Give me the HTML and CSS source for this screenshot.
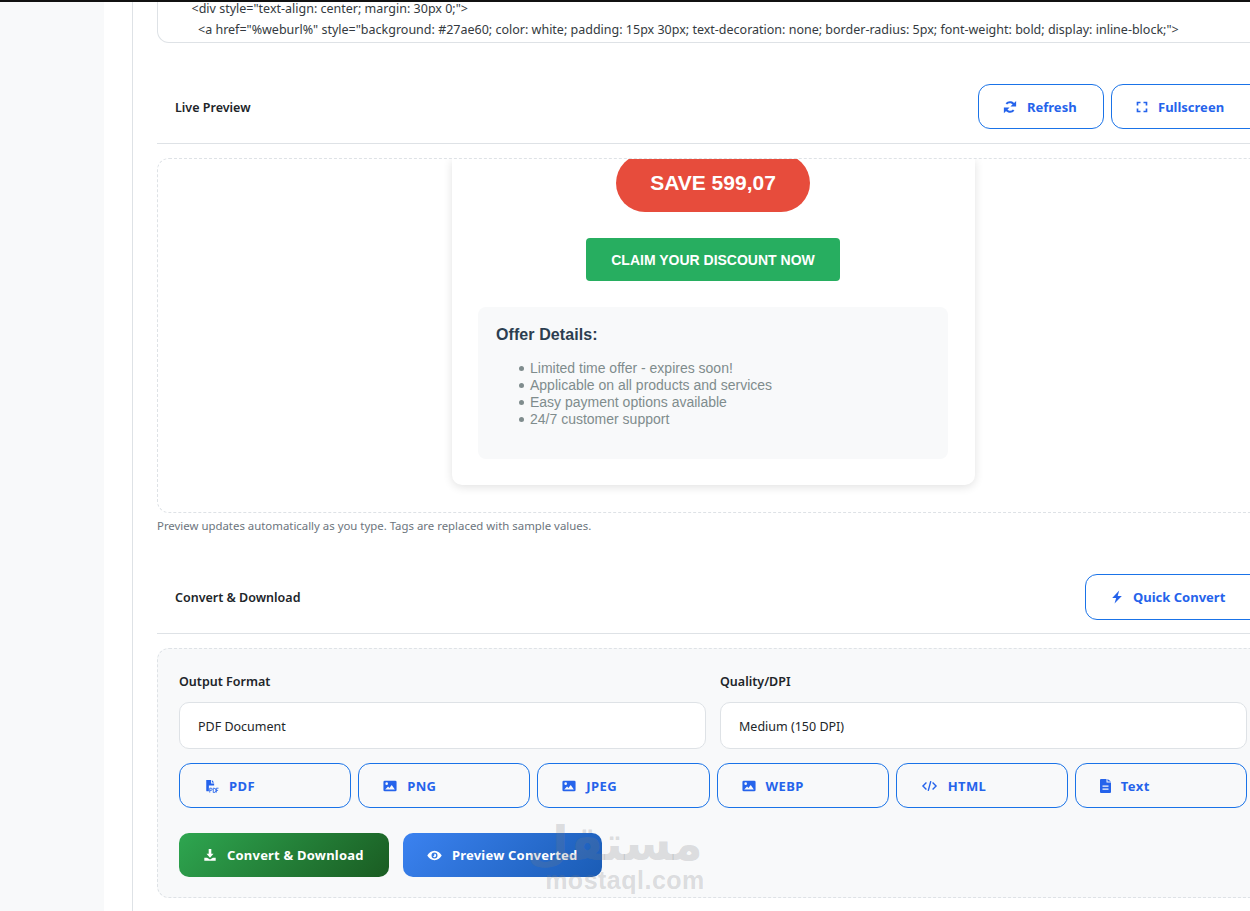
FILE: index.html
```html
<!DOCTYPE html>
<html lang="en">
<head>
<meta charset="utf-8">
<title>Convert &amp; Download</title>
<link rel="stylesheet" href="styles.css">
</head>
<body>
<svg class="defs" width="0" height="0" aria-hidden="true">
  <symbol id="i-image" viewBox="0 0 16 16"><path fill="currentColor" fill-rule="evenodd" d="M2 2h12a1.500 1.500 0 0 1 1.500 1.500v9A1.500 1.500 0 0 1 14 14H2a1.500 1.500 0 0 1-1.500-1.500v-9A1.500 1.500 0 0 1 2 2zm2.200 1.800a1.500 1.500 0 1 0 0 3 1.500 1.500 0 0 0 0-3zM2.500 12h11L10 6.800 7.300 10.300 5.800 8.700z"/></symbol>
</svg>
<div class="topbar"></div>
<div class="shell">
  <aside class="side"></aside>
  <main class="main">
    <div class="code"><span class="code-line">      &lt;div style="text-align: center; margin: 30px 0;"&gt;</span><span class="code-line">        &lt;a href="%weburl%" style="background: #27ae60; color: white; padding: 15px 30px; text-decoration: none; border-radius: 5px; font-weight: bold; display: inline-block;"&gt;</span></div>

    <header class="head head-preview">
      <h2 class="head-title">Live Preview</h2>
      <div class="head-actions">
        <button class="btn btn-refresh"><svg class="ico" viewBox="0 0 16 16"><path fill="none" stroke="currentColor" stroke-width="2.200" d="M13 6.500A5.300 5.300 0 0 0 3.800 4.400M3 9.500a5.300 5.300 0 0 0 9.200 2.100"/><path fill="currentColor" d="M15 1v6.500H8.500zM1 15V8.500h6.500z"/></svg>Refresh</button>
        <button class="btn btn-full"><svg class="ico ico-full" viewBox="0 0 16 16"><path fill="none" stroke="currentColor" stroke-width="2.200" d="M2 6V2h4M10 2h4v4M14 10v4h-4M6 14H2v-4"/></svg>Fullscreen</button>
      </div>
    </header>

    <section class="frame">
      <div class="mail">
        <div class="save">SAVE 599,07</div>
        <a class="claim">CLAIM YOUR DISCOUNT NOW</a>
        <div class="offer">
          <h3 class="offer-title">Offer Details:</h3>
          <ul class="offer-list">
            <li>Limited time offer - expires soon!</li>
            <li>Applicable on all products and services</li>
            <li>Easy payment options available</li>
            <li>24/7 customer support</li>
          </ul>
        </div>
      </div>
    </section>
    <p class="note">Preview updates automatically as you type. Tags are replaced with sample values.</p>

    <header class="head head-convert">
      <h2 class="head-title">Convert &amp; Download</h2>
      <div class="head-actions">
        <button class="btn btn-quick"><svg class="ico" viewBox="0 0 16 16"><path fill="currentColor" d="M10.500 .5 2.500 9.200h4.500L5.200 15.500 13.500 6.800H8.800z"/></svg>Quick Convert</button>
      </div>
    </header>

    <section class="panel">
      <div class="fields">
        <div class="field">
          <label class="label">Output Format</label>
          <div class="select">PDF Document</div>
        </div>
        <div class="field">
          <label class="label">Quality/DPI</label>
          <div class="select">Medium (150 DPI)</div>
        </div>
      </div>
      <div class="formats">
        <button class="fmt"><svg class="ico ico-pdf" viewBox="0 0 16 16"><path fill="currentColor" d="M2 1h5.500v4H11v2.500H5V14H3a1 1 0 0 1-1-1zM8.500 1 11 4H8.500z"/><path fill="none" stroke="currentColor" stroke-width="1" d="M6 15.500v-5h1.500a1 1 0 0 1 0 2.500H6M10 10.500v5h.7a2 2 0 0 0 0-5zM13.500 15.500v-5h2.500M13.500 13h2"/></svg>PDF</button>
        <button class="fmt"><svg class="ico"><use href="#i-image"/></svg>PNG</button>
        <button class="fmt"><svg class="ico"><use href="#i-image"/></svg>JPEG</button>
        <button class="fmt"><svg class="ico"><use href="#i-image"/></svg>WEBP</button>
        <button class="fmt"><svg class="ico ico-code" viewBox="0 0 17 16"><path fill="none" stroke="currentColor" stroke-width="1.600" d="M5 4 1 8l4 4M12 4l4 4-4 4M10 2.500l-3 11"/></svg>HTML</button>
        <button class="fmt"><svg class="ico ico-file" viewBox="0 0 11 14"><path fill="currentColor" fill-rule="evenodd" d="M1 0h5.500v3.500H11V13a1 1 0 0 1-1 1H1a1 1 0 0 1-1-1V1a1 1 0 0 1 1-1zM7.500 0 11 2.500H7.500zM2.500 6.500v1.300h6V6.500zM2.500 9.500v1.300h6V9.500z"/></svg>Text</button>
      </div>
      <div class="actions">
        <button class="cta cta-green"><svg class="ico" viewBox="0 0 16 16"><path fill="currentColor" d="M6.500 1h3v5.500H12L8 11 4 6.500h2.500zM1.500 11h3.200L8 13l3.300-2h3.200v3.500h-13z"/></svg>Convert &amp; Download</button>
        <button class="cta cta-blue"><svg class="ico ico-eye" viewBox="0 0 16 16"><path fill="currentColor" fill-rule="evenodd" d="M8 3c3.500 0 6.200 2.300 7.700 5-1.500 2.700-4.200 5-7.700 5S1.800 10.700.3 8C1.800 5.300 4.500 3 8 3zm0 1.800a3.200 3.200 0 1 0 0 6.400 3.200 3.200 0 0 0 0-6.400zm0 1.400a1.800 1.800 0 1 1-1.700 2.400c.9.300 1.800-.6 1.400-1.500z"/></svg>Preview Converted</button>
      </div>
    </section>
  </main>
</div>
<div class="watermark" aria-hidden="true">
  <span class="wm-ar" lang="ar" dir="rtl">مستقل</span>
  <span class="wm-en">mostaql.com</span>
</div>
</body>
</html>
```
FILE: styles.css
```css
* { box-sizing: border-box; }
html, body { margin: 0; height: 911px; overflow: hidden; }
body {
  background: #fff;
  font-family: "Noto Sans", "Open Sans", sans-serif;
  font-size: 13px;
  color: #212529;
  position: relative;
}
.defs { position: absolute; }
.topbar { height: 2px; background: #111; }
.shell { display: flex; width: 1300px; }
.side { width: 104px; flex: none; height: 909px; background: #f8f9fa; }
.main {
  margin-left: 28px;
  width: 1138px;
  height: 909px;
  padding-left: 24px;
  border-left: 1px solid #dee2e6;
  flex: none;
}
.code {
  height: 41px;
  border: 1px solid #dee2e6;
  border-top: 0;
  border-radius: 0 0 12px 12px;
  padding-left: 14px;
  white-space: pre;
  font-size: 12.500px;
  color: #343a40;
}
.code-line { display: block; line-height: 21px; }
.code-line:first-child { line-height: 13px; margin-bottom: 4px; }
.head {
  display: flex;
  align-items: center;
  justify-content: space-between;
  border-bottom: 1px solid #dee2e6;
  padding-left: 18px;
}
.head-preview { margin-top: 41px; height: 60px; padding-bottom: 14px; }
.head-convert { margin-top: 39px; height: 60px; padding-bottom: 14px; }
.head-title { margin: 0; padding-top: 2px; font-size: 12.500px; font-weight: 600; color: #212529; }
.head-actions { display: flex; gap: 7px; align-self: flex-start; }
.btn {
  display: flex;
  align-items: center;
  height: 45px;
  background: #fff;
  border: 1px solid #1a73e8;
  border-radius: 12px;
  color: #2563eb;
  font: 700 13px "Noto Sans", sans-serif;
  padding: 0 24px;
  gap: 10px;
}
.btn-refresh { width: 126px; }
.btn-full { width: 159px; }
.btn-quick { width: 185px; height: 46px; gap: 9px; }
.ico { width: 14px; height: 14px; flex: none; color: inherit; }
.ico-full { width: 12px; height: 12px; }
.ico-pdf { width: 15px; }
.ico-code { width: 17px; }
.ico-file { width: 11px; }
.ico-eye { width: 15px; height: 15px; }
.frame {
  margin-top: 14px;
  height: 355px;
  border: 1px dashed #dee2e6;
  border-radius: 12px;
  overflow: hidden;
  display: flex;
  justify-content: center;
}
.mail {
  width: 523px;
  height: 326px;
  background: #fff;
  border-radius: 0 0 10px 10px;
  box-shadow: 0 2px 10px rgba(0, 0, 0, .12);
  padding: 0 27px 0 26px;
  display: flex;
  flex-direction: column;
  align-items: center;
  font-family: "Liberation Sans", Arial, sans-serif;
}
.save {
  margin-top: -5px;
  width: 194px;
  height: 58px;
  background: #e74c3c;
  color: #fff;
  border-radius: 29px;
  font-size: 21px;
  font-weight: 700;
  display: flex;
  align-items: center;
  justify-content: center;
}
.claim {
  margin-top: 26px;
  width: 254px;
  height: 43px;
  background: #27ae60;
  color: #fff;
  border-radius: 4px;
  font-size: 14px;
  font-weight: 700;
  display: flex;
  align-items: center;
  justify-content: center;
}
.offer {
  align-self: stretch;
  margin-top: 26px;
  height: 152px;
  background: #f8f9fa;
  border-radius: 8px;
  padding: 18px 18px;
}
.offer-title { margin: 0; font-size: 16px; line-height: 20px; color: #2c3e50; font-weight: 700; letter-spacing: .08px; }
.offer-list {
  margin: 15px 0 0;
  padding-left: 23px;
  list-style: none;
  font-size: 14px;
  line-height: 17px;
  color: #7f8c8d;
}
.offer-list li { display: flex; align-items: center; gap: 6px; }
.offer-list li::before {
  content: "";
  width: 5px;
  height: 5px;
  border-radius: 50%;
  background: #7f8c8d;
}
.note { margin: 4px 0 0; font-size: 11.400px; line-height: 18px; color: #6c757d; }
.panel {
  margin-top: 14px;
  height: 250px;
  background: #f8f9fa;
  border: 1px dashed #dee2e6;
  border-radius: 12px;
  padding: 21px 21px;
}
.fields { display: grid; grid-template-columns: 527px 527px; gap: 14px; }
.field { display: flex; flex-direction: column; }
.label { padding-top: 2px; font-size: 12.500px; font-weight: 600; line-height: 20px; color: #212529; margin-bottom: 10px; }
.select {
  height: 47px;
  background: #fff;
  border: 1px solid #dee2e6;
  border-radius: 10px;
  padding: 2px 18px 0;
  display: flex;
  align-items: center;
  font-size: 12.500px;
  color: #212529;
}
.formats {
  margin-top: 14px;
  width: 1068px;
  display: grid;
  grid-template-columns: repeat(6, 1fr);
  gap: 7px;
}
.fmt {
  height: 45px;
  background: transparent;
  border: 1px solid #1a73e8;
  border-radius: 12px;
  color: #2563eb;
  font: 700 13px "Noto Sans", sans-serif;
  letter-spacing: .4px;
  display: flex;
  align-items: center;
  padding: 0 24px;
  gap: 10px;
}
.actions { margin-top: 25px; display: flex; gap: 14px; }
.cta {
  height: 44px;
  border: 0;
  border-radius: 10px;
  color: #fff;
  font: 700 13px "Noto Sans", sans-serif;
  letter-spacing: .2px;
  display: flex;
  align-items: center;
  padding: 0 24px;
  gap: 10px;
}
.cta-green { width: 210px; background: linear-gradient(135deg, #2ea650, #1a5c22); }
.cta-blue { width: 199px; background: linear-gradient(135deg, #3b82f0, #1a5cb5); }
.watermark {
  position: absolute;
  left: 545px;
  top: 813px;
  width: 160px;
  height: 84px;
  display: flex;
  flex-direction: column;
  align-items: center;
  color: rgba(120, 125, 130, .24);
  font-family: "Liberation Sans", Arial, sans-serif;
  font-weight: 700;
  pointer-events: none;
}
.wm-ar { font-family: "DejaVu Sans", sans-serif; font-size: 48px; padding: 6px 20px 0 0; line-height: 48px; }
.wm-en { font-size: 25px; line-height: 26px; letter-spacing: .5px; }
```
